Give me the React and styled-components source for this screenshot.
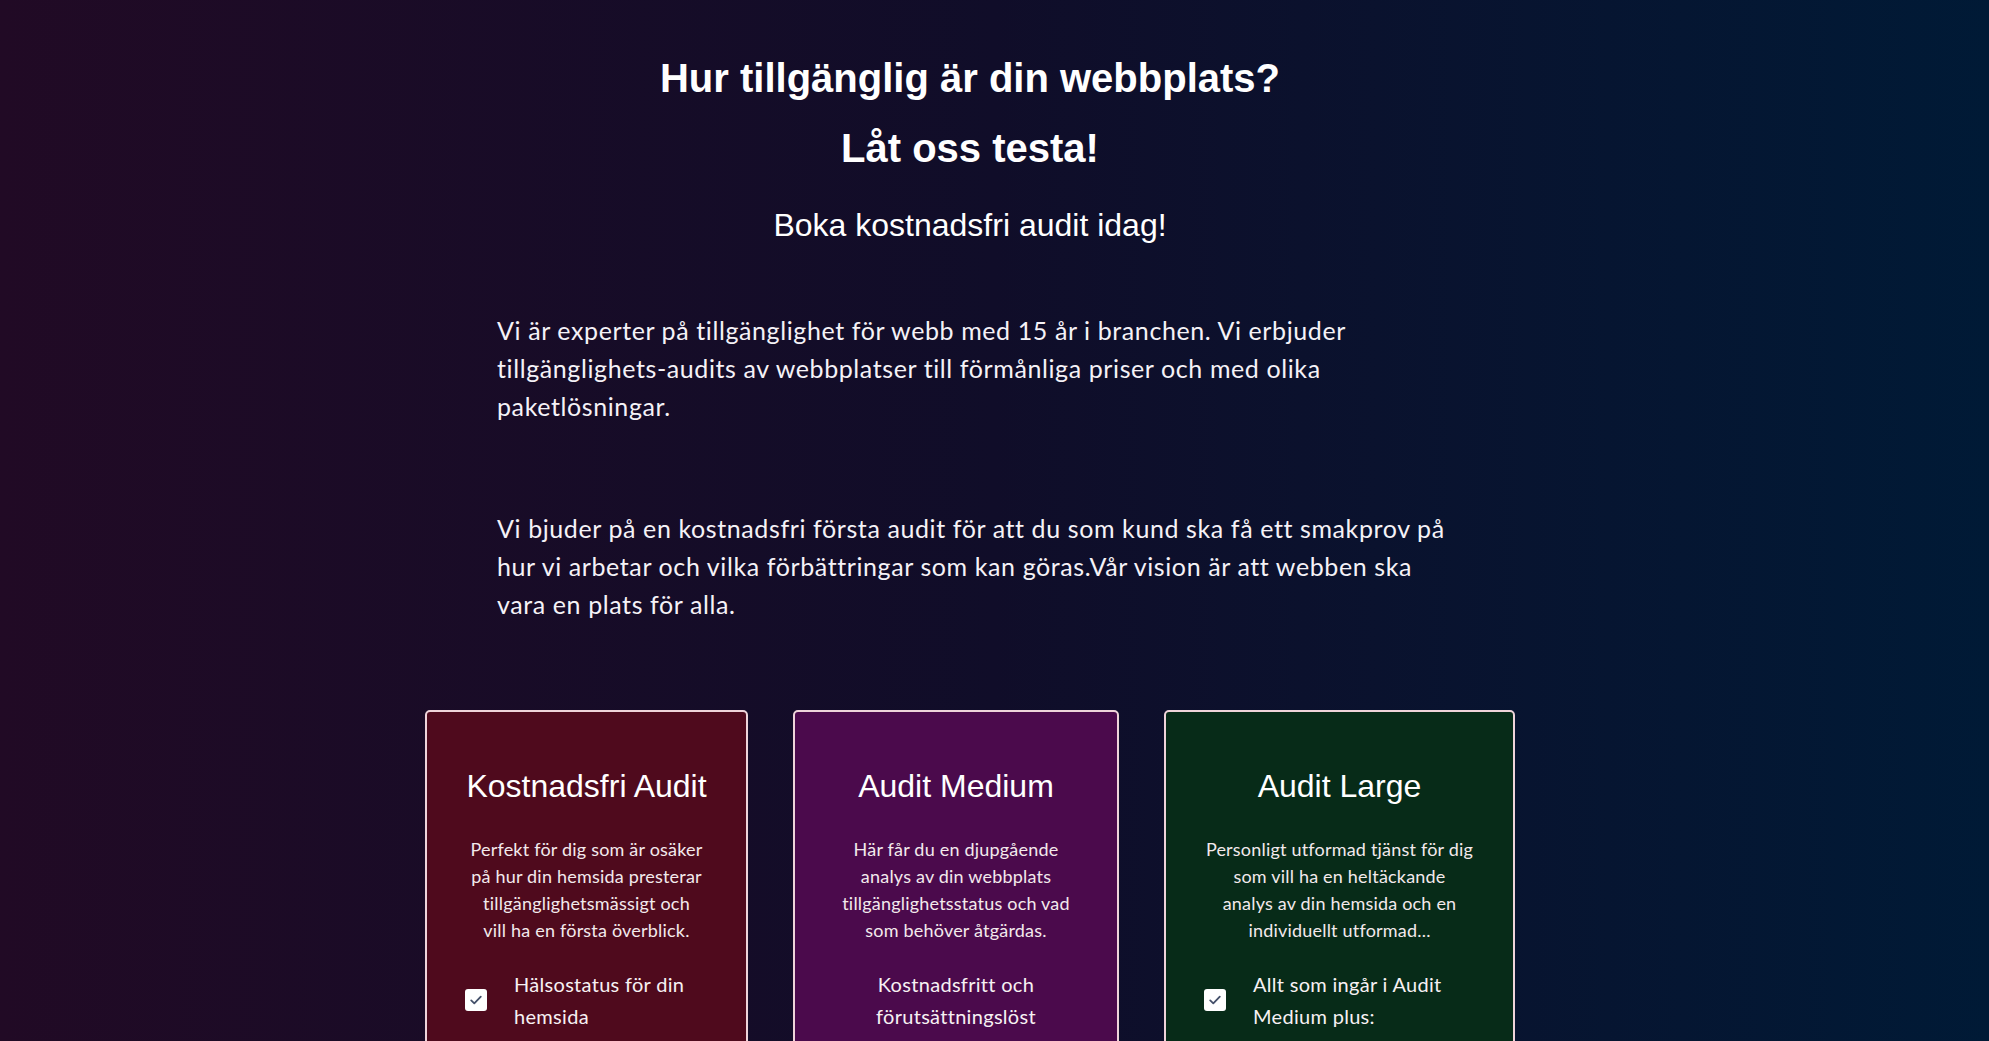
import React from 'react';
import styled, { createGlobalStyle } from 'styled-components';

const intro = [
    [
        'Vi är experter på tillgänglighet för webb med 15 år i branchen. Vi erbjuder',
        'tillgänglighets-audits av webbplatser till förmånliga priser och med olika',
        'paketlösningar.'
    ],
    [
        'Vi bjuder på en kostnadsfri första audit för att du som kund ska få ett smakprov på',
        'hur vi arbetar och vilka förbättringar som kan göras.Vår vision är att webben ska',
        'vara en plats för alla.'
    ]
];

const cards = [
    {
        title: 'Kostnadsfri Audit',
        bg: '#4f0a1d',
        width: 323,
        desc: [
            'Perfekt för dig som är osäker',
            'på hur din hemsida presterar',
            'tillgänglighetsmässigt och',
            'vill ha en första överblick.'
        ],
        features: [
            { check: true, text: 'Hälsostatus för din hemsida' }
        ]
    },
    {
        title: 'Audit Medium',
        bg: '#4b0a4c',
        width: 326,
        desc: [
            'Här får du en djupgående',
            'analys av din webbplats',
            'tillgänglighetsstatus och vad',
            'som behöver åtgärdas.'
        ],
        features: [
            { check: false, lines: ['Kostnadsfritt och', 'förutsättningslöst', 'första möte för att'] }
        ]
    },
    {
        title: 'Audit Large',
        bg: '#072b18',
        width: 351,
        desc: [
            'Personligt utformad tjänst för dig',
            'som vill ha en heltäckande',
            'analys av din hemsida och en',
            'individuellt utformad...'
        ],
        features: [
            { check: true, text: 'Allt som ingår i Audit Medium plus:' }
        ]
    }
];

export default function App() {
    return (
        <>
            <GlobalStyle />
            <Page>
                <Title>
                    Hur tillgänglig är din webbplats?
                    <br />
                    Låt oss testa!
                </Title>
                <Subtitle>Boka kostnadsfri audit idag!</Subtitle>
                <Intro>
                    {intro.map((para, i) => (
                        <Paragraph key={i}>
                            {para.map((line) => <Line key={line}>{line}</Line>)}
                        </Paragraph>
                    ))}
                </Intro>
                <Cards>
                    {cards.map((card) => (
                        <Card key={card.title} $bg={card.bg} $width={card.width}>
                            <CardTitle>{card.title}</CardTitle>
                            <Desc>
                                {card.desc.map((line) => <Line key={line}>{line}</Line>)}
                            </Desc>
                            <Features>
                                {card.features.map((f, i) => (
                                    <Feature key={i} $check={f.check}>
                                        {f.check && (
                                            <CheckBox>
                                                <svg width="16" height="16" viewBox="0 0 16 16" fill="none">
                                                    <path d="M3.2 8.4l3.1 3 6.5-6.8" stroke="#44506a" strokeWidth="1.8" strokeLinecap="round" strokeLinejoin="round" />
                                                </svg>
                                            </CheckBox>
                                        )}
                                        <span>
                                            {f.lines ? f.lines.map((l) => <Line key={l}>{l}</Line>) : f.text}
                                        </span>
                                    </Feature>
                                ))}
                            </Features>
                        </Card>
                    ))}
                </Cards>
            </Page>
        </>
    );
}

const GlobalStyle = createGlobalStyle`
    html, body {
        margin: 0;
        padding: 0;
        overflow: hidden;
    }
    body {
        background: #100d29;
        color: #ffffff;
        font-family: "Liberation Sans", Arial, sans-serif;
    }
`;

const Page = styled.main`
    min-height: 100vh;
    box-sizing: border-box;
    padding: 43px 49px 0 0;
    background: linear-gradient(90deg, #210a25 0%, #100d29 50%, #001a36 100%);
    display: flex;
    flex-direction: column;
    align-items: center;
`;

const Title = styled.h1`
    margin: 0;
    font-size: 40px;
    line-height: 70px;
    font-weight: 700;
    text-align: center;
`;

const Subtitle = styled.h2`
    margin: 22px 0 0;
    font-size: 32px;
    line-height: 40px;
    font-weight: 400;
    text-align: center;
`;

const Intro = styled.section`
    width: 946px;
    margin-top: 66px;
    display: flex;
    flex-direction: column;
    gap: 84px;
`;

const Paragraph = styled.p`
    margin: 0;
    font-family: Lato, "Open Sans", sans-serif;
    font-size: 25px;
    letter-spacing: 0.6px;
    line-height: 38px;
    color: #f5f2f7;
`;

const Line = styled.span`
    display: block;
    white-space: nowrap;
`;

const Cards = styled.div`
    display: flex;
    align-items: flex-start;
    gap: 45px;
    margin-top: 87px;
`;

const Card = styled.article`
    width: ${(p) => p.$width}px;
    box-sizing: border-box;
    background: ${(p) => p.$bg};
    border: 2px solid #efd4da;
    border-radius: 5px;
    padding: 54px 30px 80px;
    text-align: center;
`;

const CardTitle = styled.h3`
    margin: 0;
    font-size: 32px;
    line-height: 40px;
    font-weight: 400;
`;

const Desc = styled.p`
    margin: 30px 0 0;
    font-family: Lato, "Open Sans", sans-serif;
    font-size: 18px;
    letter-spacing: 0.2px;
    line-height: 27px;
    color: #f3e9ec;
`;

const Features = styled.ul`
    list-style: none;
    margin: 24px 0 0;
    padding: 0;
    display: flex;
    flex-direction: column;
    gap: 16px;
`;

const Feature = styled.li`
    display: flex;
    align-items: center;
    justify-content: ${(p) => (p.$check ? 'flex-start' : 'center')};
    gap: 27px;
    padding-left: ${(p) => (p.$check ? '8px' : '0')};
    text-align: ${(p) => (p.$check ? 'left' : 'center')};
    font-family: Lato, "Open Sans", sans-serif;
    font-size: 20px;
    letter-spacing: 0.3px;
    line-height: 32px;
    color: #f7f1f3;
`;

const CheckBox = styled.span`
    flex-shrink: 0;
    width: 22px;
    height: 22px;
    border-radius: 3px;
    background: #ffffff;
    display: flex;
    align-items: center;
    justify-content: center;
`;
